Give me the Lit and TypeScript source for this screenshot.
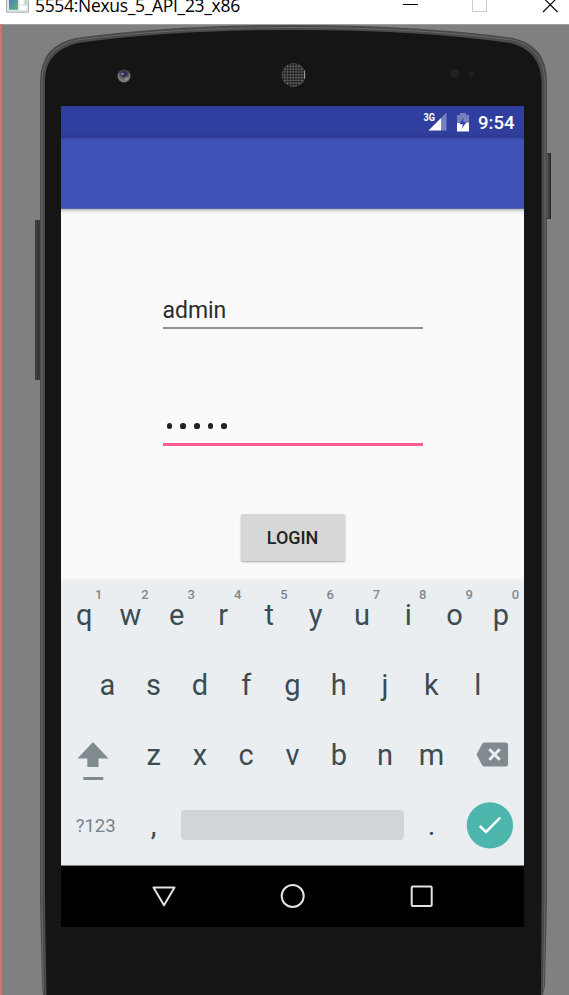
import { LitElement, html, svg, css } from "lit";
import { customElement, property } from "lit/decorators.js";

const base = css`
  *, :host { box-sizing: border-box; }
  svg { display: block; }
`;

@customElement("window-bar")
class WindowBar extends LitElement {
  static styles = [base, css`
    :host { display: flex; height: 24px; background: #fff; position: relative; }
    .icon { width: 24px; height: 14px; margin-left: 6px; flex: none; }
    .title { margin-left: 5px; font: 17.500px/11px "Open Sans", "Noto Sans", sans-serif; letter-spacing: -0.320px; color: #000; white-space: nowrap; flex: 1; }
    .buttons { width: 170px; height: 16px; flex: none; }
  `];
  render() {
    return html`
      <svg class="icon" viewBox="0 0 24 14">
        <defs><linearGradient id="g" x2="1" y2="1"><stop offset="0" stop-color="#4583bd"/><stop offset="1" stop-color="#65b276"/></linearGradient></defs>
        <path d="M.5 0V12.2H22.5V0" fill="#e3e6e8" stroke="#a9b0b7"/>
        <path d="M3 0H12V9.8H3Z" fill="url(#g)"/>
        <path d="M13.5 0H17.5V4.5H13.5ZM13.5 6H20.5V10H13.5Z" fill="#fff"/>
        <path d="M18.7 0H21V5H18.7Z" fill="#b9ddc2"/>
      </svg>
      <div class="title">5554:Nexus_5_API_23_x86</div>
      <svg class="buttons" viewBox="399 0 170 16" fill="none" shape-rendering="crispEdges">
        <path d="M403 4.500H418" stroke="#000"/>
        <path d="M472.500-3V11.500H486.500V-3" stroke="#ccc"/>
        <path d="M543-2.500L557.500 12M557.500-2.500L543 12" stroke="#000" shape-rendering="auto" stroke-width="1.100"/>
      </svg>`;
  }
}

@customElement("phone-shell")
class PhoneShell extends LitElement {
  static styles = [base, css`:host { display: block; }`];

  private grille() {
    const dots = [];
    for (let y = -10; y <= 10; y += 2.8)
      for (let x = -10; x <= 10; x += 2.8)
        if (x * x + y * y < 125) dots.push(svg`<circle cx=${x} cy=${y} r="1.050"/>`);
    return dots;
  }

  render() {
    return html`
      <svg width="569" height="971" viewBox="0 24 569 971">
        <defs>
          <linearGradient id="side"><stop offset="0" stop-color="#555"/><stop offset=".4" stop-color="#333"/><stop offset="1" stop-color="#454545"/></linearGradient>
          <linearGradient id="power"><stop offset="0" stop-color="#777"/><stop offset=".4" stop-color="#4a4a4a"/><stop offset="1" stop-color="#222"/></linearGradient>
          <radialGradient id="lens" cy=".3"><stop offset="0" stop-color="#242a80"/><stop offset=".4" stop-color="#30334c"/><stop offset=".6" stop-color="#4c4c4c"/><stop offset="1" stop-color="#7a7a7a"/></radialGradient>
        </defs>
        <rect y="24" width="569" height="971" fill="#808080"/>
        <rect y="24" width="569" height="1" fill="#a0a0a0"/>
        <rect x="35" y="220" width="7" height="160" fill="url(#side)"/>
        <path d="M35.500 220V380M35 220.500H41M35 379.500H41" stroke="#3a3a3a" fill="none"/>
        <rect x="546" y="153" width="5" height="66" fill="url(#power)"/>
        <path d="M546 153.500H551M546 218.500H551" stroke="#333"/>
        <path d="M43 995L42 985L40 900V82Q40 45 76 38Q170 25 293 25Q420 25 513 38Q547 45 547 82V900L545 985L543 995Z" fill="#4a4a4c"/>
        <path d="M43.200 990L41.800 900V82Q42 48 77 40Q170 27.500 293 27.500Q420 27.500 512 40Q544 47 545 82V900L543.500 990" fill="none" stroke="#68686c" stroke-width="1"/>
        <path d="M46.500 995L45 900V82Q44.500 51 78 43Q170 30 293 30Q420 30 510 43Q540.500 50 541.500 82V900L541 995Z" fill="#151515"/>
        <circle cx="124" cy="76" r="6.500" fill="url(#lens)"/>
        <circle cx="122.500" cy="74" r="1.200" fill="#858bb5"/>
        <circle cx="126.500" cy="78.500" r="1.800" fill="#999" opacity=".6"/>
        <g transform="translate(293.500 75)" fill="#181818">
          <circle r="11.800" fill="#565656"/>${this.grille()}
          <path d="M11-4.500V3.500" stroke="#999" stroke-width="1.200"/>
        </g>
        <circle cx="455" cy="73.500" r="4.500" fill="#202020"/><circle cx="471" cy="74" r="2.800" fill="#202020"/>
        <rect y="24" width="1.500" height="971" fill="#d9776b"/>
      </svg>`;
  }
}

@customElement("status-bar")
class StatusBar extends LitElement {
  static styles = [base, css`
    :host { display: flex; height: 32px; padding-right: 10px; justify-content: flex-end; background: linear-gradient(#303f9f 27px, #2c3990); color: #fff; }
    .icons { width: 53px; height: 32px; }
    .net { font: 700 10.500px "Roboto", sans-serif; fill: #fff; }
    .clock { margin-left: 4px; font: 500 18.500px/34px "Roboto", sans-serif; width: 36px; white-space: nowrap; }
  `];
  render() {
    return html`
      <svg class="icons" viewBox="421 106 53 32">
        <text class="net" x="423.500" y="121" textLength="11.500" lengthAdjust="spacingAndGlyphs">3G</text>
        <path d="M446.500 112.500V130.500H441V118Z" fill="#7780c0"/>
        <path d="M441 118V130.500H428.500Z" fill="#fff"/>
        <path d="M457 115H460V113H466V115H469V122L466 124H457Z" fill="#7480be"/>
        <path d="M457 123H463L469 122.500V131.500H457Z" fill="#fff"/>
        <path d="M463.500 117.500L459.500 124.200H463L461.500 129L466.500 122H463Z" fill="#303f9f"/>
      </svg>
      <div class="clock">9:54</div>`;
  }
}

@customElement("login-form")
class LoginForm extends LitElement {
  static styles = [base, css`
    :host { display: flex; flex-direction: column; align-items: center; background: linear-gradient(#bbb, #eee 3px, #fafafa 6px, #fafafa calc(100% - 3px), #eee); font-family: "Roboto", sans-serif; color: #2b2b2b; }
    .field { width: 260px; font-size: 23px; line-height: 23px; letter-spacing: -.050px; }
    .user { margin-top: 90px; border-bottom: 2px solid #8f8f8f; height: 30px; }
    .password { margin-top: 86px; border-bottom: 3px solid #ff5c93; height: 31px; display: flex; gap: 8px; padding: 8px 4px 0; }
    .dot { width: 5.700px; height: 5.700px; border-radius: 50%; background: #222; }
    .button { margin-top: 68px; width: 104px; height: 47px; border-radius: 2px; background: #d6d8d7; box-shadow: 0 1px 2px #0005; font: 500 18px "Roboto", sans-serif; line-height: 47px; text-align: center; letter-spacing: -.050px; color: #222; }
  `];
  render() {
    return html`
      <div class="field user">admin</div>
      <div class="field password">${[0, 1, 2, 3, 4].map(() => html`<span class="dot"></span>`)}</div>
      <div class="button">LOGIN</div>`;
  }
}

@customElement("soft-key")
class SoftKey extends LitElement {
  @property() label = "";
  @property() hint = "";
  static styles = [base, css`
    :host { display: flex; justify-content: center; position: relative; width: 46.300px; height: 70px; font: 29px/68px "Roboto", sans-serif; color: #3b4c53; }
    .hint { position: absolute; left: 34px; top: 6px; font: 500 13px/15px "Roboto", sans-serif; color: #7e898d; }
  `];
  render() {
    return html`<span>${this.label}</span>${this.hint ? html`<span class="hint">${this.hint}</span>` : ""}`;
  }
}

@customElement("soft-keyboard")
class SoftKeyboard extends LitElement {
  static styles = [base, css`
    :host { display: block; height: 286px; background: #eaeef1; border-top: 1px solid #f1f3f4; border-bottom: 1px solid #7b8285; }
    .row { display: flex; justify-content: center; height: 70px; }
    .wide { width: 69.450px; height: 70px; }
    .mode { width: 69.450px; text-align: center; font: 18.500px/70px "Roboto", sans-serif; color: #77858a; }
    .space { width: 224px; height: 30px; margin: 19px 4px 0; border-radius: 4px; background: #d0d5d8; }
  `];
  render() {
    const keys = (s: string) => [...s].map((k) => html`<soft-key .label=${k}></soft-key>`);
    return html`
      <div class="row">${[..."qwertyuiop"].map((k, i) => html`<soft-key .label=${k} .hint=${String((i + 1) % 10)}></soft-key>`)}</div>
      <div class="row">${keys("asdfghjkl")}</div>
      <div class="row">
        <svg class="wide" viewBox="61 721 69.450 70" fill="#808b8f">
          <path d="M93 742L108.500 758.500H98.500V767H87.300V758.500H77.500Z"/><rect x="83.300" y="777" width="20" height="3"/>
        </svg>
        ${keys("zxcvbnm")}
        <svg class="wide" viewBox="454.950 721 69.450 70">
          <path d="M484 742.500H505.500Q508 742.500 508 745V764Q508 766.500 505.500 766.500H484Q483 766.500 482 765L476.500 754.500L482 744Q483 742.500 484 742.500Z" fill="#808b8f"/>
          <path d="M489.300 749.300L499.700 759.700M499.700 749.300L489.300 759.700" stroke="#eaeef1" stroke-width="3"/>
        </svg>
      </div>
      <div class="row">
        <div class="mode">?123</div>
        <soft-key label=","></soft-key>
        <div class="space"></div>
        <soft-key label="."></soft-key>
        <svg class="wide" viewBox="454.750 791 69.450 70">
          <circle cx="489.700" cy="825.300" r="23.200" fill="#4db6ac"/>
          <path d="M479.500 826L485.800 832L500 817.500" fill="none" stroke="#fff" stroke-width="2.500"/>
        </svg>
      </div>`;
  }
}

@customElement("app-root")
class AppRoot extends LitElement {
  static styles = [base, css`
    :host { display: block; width: 569px; height: 995px; overflow: hidden; }
    .stage { position: relative; height: 971px; padding: 82px 0 0 61px; }
    .shell { position: absolute; inset: 0; }
    .screen { position: relative; width: 463px; height: 821px; overflow: hidden; background: #000; }
    .toolbar { height: 71px; background: linear-gradient(#3a4aa8, #3f51b5 2px); border-bottom: 1px solid #5462a8; }
    .form { height: 371px; }
    .nav { width: 463px; height: 61px; }
  `];
  render() {
    return html`
      <window-bar></window-bar>
      <div class="stage">
        <phone-shell class="shell"></phone-shell>
        <div class="screen">
          <status-bar></status-bar>
          <div class="toolbar"></div>
          <login-form class="form"></login-form>
          <soft-keyboard></soft-keyboard>
          <svg class="nav" viewBox="61 866 463 61" fill="none" stroke="#e2e2e2" stroke-width="2" stroke-linejoin="round">
            <path d="M153.500 887.500H174.500L164 905.300Z"/>
            <circle cx="292.700" cy="896" r="11"/>
            <rect x="411.700" y="886.500" width="20" height="19.500" rx="1"/>
          </svg>
        </div>
      </div>`;
  }
}
